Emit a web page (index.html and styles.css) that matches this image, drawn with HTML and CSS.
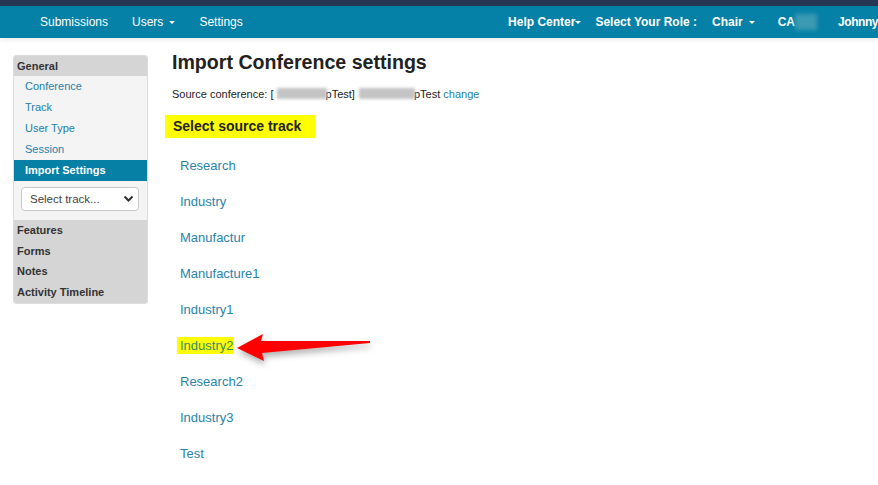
FILE: index.html
```html
<!DOCTYPE html>
<html>
<head>
<meta charset="utf-8">
<link rel="stylesheet" href="styles.css">
</head>
<body>
<div class="topband"></div>
<nav class="navbar">
  <div class="nav-left">
    <a class="nav-item">Submissions</a>
    <a class="nav-item">Users <span class="caret"></span></a>
    <a class="nav-item">Settings</a>
  </div>
  <div class="nav-right">
    <a class="nav-r help">Help Center<span class="caret tight"></span></a>
    <span class="nav-r role">Select Your Role :</span>
    <a class="nav-r chair">Chair <span class="caret"></span></a>
    <span class="nav-r ca">CA<span class="blur-nav"></span></span>
    <span class="nav-r user">Johnny</span>
  </div>
</nav>
<div class="page">
  <aside class="sidebar">
    <div class="sb-head">General</div>
    <ul class="sb-list">
      <li><a>Conference</a></li>
      <li><a>Track</a></li>
      <li><a>User Type</a></li>
      <li><a>Session</a></li>
      <li class="active"><a>Import Settings</a></li>
    </ul>
    <div class="sb-select-wrap">
      <div class="sb-select"><span>Select track...</span>
        <svg width="11" height="8" viewBox="0 0 11 8"><path d="M1.5 1.5 L5.5 5.5 L9.5 1.5" fill="none" stroke="#333" stroke-width="2"/></svg>
      </div>
    </div>
    <div class="sb-groups">
      <div class="sb-group">Features</div>
      <div class="sb-group">Forms</div>
      <div class="sb-group">Notes</div>
      <div class="sb-group">Activity Timeline</div>
    </div>
  </aside>
  <main class="main">
    <h1 class="title">Import Conference settings</h1>
    <p class="source">Source conference: [<span class="blur b1"></span>pTest] <span class="blur b2"></span>pTest <a class="link">change</a></p>
    <div class="select-head">Select source track</div>
    <ul class="tracks">
      <li><a>Research</a></li>
      <li><a>Industry</a></li>
      <li><a>Manufactur</a></li>
      <li><a>Manufacture1</a></li>
      <li><a>Industry1</a></li>
      <li><a class="hl">Industry2</a></li>
      <li><a>Research2</a></li>
      <li><a>Industry3</a></li>
      <li><a>Test</a></li>
    </ul>
  </main>
</div>
<svg class="arrow" width="150" height="40" viewBox="0 0 150 40">
  <path d="M2 22 L28 8 L26 15 L135 15 L135 17 L27 27 L29 35 Z" fill="#ff0000"/>
</svg>
</body>
</html>
```
FILE: styles.css
```css
* { box-sizing: border-box; }
body {
  margin: 0;
  font-family: "Liberation Sans", Arial, sans-serif;
  background: #fff;
  color: #222;
}
a { text-decoration: none; cursor: pointer; }
.topband { height: 6px; background: #253752; }
.navbar {
  height: 32px;
  background: #0580a6;
  display: flex;
  justify-content: space-between;
  align-items: center;
  color: #fff;
  box-shadow: 0 2px 5px rgba(0,0,0,0.08);
  overflow: hidden;
}
.nav-left { display: flex; padding-left: 28px; }
.nav-item {
  color: #fff;
  font-size: 12px;
  padding: 0 12px;
  display: flex;
  align-items: center;
}
.caret {
  display: inline-block;
  width: 0; height: 0;
  border-left: 3.5px solid transparent;
  border-right: 3.5px solid transparent;
  border-top: 3.5px solid #fff;
  margin-left: 6px;
  vertical-align: middle;
}
.caret.tight { margin-left: 0; }
.nav-right { display: flex; align-items: center; white-space: nowrap; }
.nav-r {
  color: #fff;
  font-size: 12px;
  font-weight: bold;
  display: flex;
  align-items: center;
}
.help { margin-right: 14px; }
.role { margin-right: 15px; }
.chair { margin-right: 23px; }
.ca { margin-right: 21px; }
.blur-nav {
  display: inline-block;
  width: 22px; height: 16px;
  background: #3c9ab2;
  filter: blur(2px);
}
.user { margin-right: 0; letter-spacing: -0.45px; }

.page {
  display: flex;
  align-items: flex-start;
  padding: 17px 0 0 13px;
}
.sidebar {
  width: 135px;
  flex: none;
  border: 1px solid #dcdcdc;
  border-radius: 3px;
  background: #f4f4f4;
  overflow: hidden;
  font-size: 11px;
}
.sb-head {
  background: #d5d5d5;
  font-weight: bold;
  color: #333;
  height: 20px;
  line-height: 20px;
  padding-left: 3px;
}
.sb-list { list-style: none; margin: 0; padding: 0; }
.sb-list li {
  height: 21px;
  line-height: 21px;
  padding-left: 11px;
}
.sb-list li a { color: #1b80aa; }
.sb-list li.active { background: #0780a6; }
.sb-list li.active a { color: #fff; font-weight: bold; }
.sb-select-wrap { padding: 6px 8px 9px 7px; }
.sb-select {
  height: 24px;
  background: #fff;
  border: 1px solid #c8c8c8;
  border-radius: 4px;
  display: flex;
  align-items: center;
  justify-content: space-between;
  padding: 0 4px 0 8px;
  color: #444;
  font-size: 11.5px;
}
.sb-groups { background: #d5d5d5; }
.sb-group {
  height: 20.7px;
  line-height: 20.7px;
  padding-left: 3px;
  font-weight: bold;
  color: #333;
}

.main { margin-left: 24px; flex: 1; }
.title {
  margin: 0;
  font-size: 19.6px;
  line-height: 14px;
  font-weight: bold;
  color: #222;
}
.source {
  margin: 18px 0 0 0;
  font-size: 11px;
  line-height: 14px;
  color: #222;
}
.blur {
  display: inline-block;
  height: 11px;
  background: #c4c4c4;
  filter: blur(1.5px);
  vertical-align: -1px;
}
.b1 { width: 50px; margin: 0 -1px 0 3px; }
.b2 { width: 56px; margin: 0 -1px 0 1px; }
.link { color: #1b80aa; }
.select-head {
  display: inline-block;
  margin: 14px 0 0 -7px;
  background: #ffff00;
  height: 23px;
  line-height: 23px;
  padding: 0 14px 0 8px;
  font-size: 14px;
  font-weight: bold;
  color: #222;
}
.tracks {
  list-style: none;
  margin: 10px 0 0 0;
  padding: 0 0 0 8px;
}
.tracks li {
  height: 36px;
  line-height: 36px;
  font-size: 13px;
}
.tracks li a { color: #2a83ab; }
.tracks li a.hl {
  background: #ffff00;
  color: #3a8a6a;
  padding: 1px 1px 1px 3px;
  margin-left: -3px;
}
.arrow {
  position: absolute;
  left: 235px;
  top: 326px;
  filter: drop-shadow(1px 4px 3px rgba(0,0,0,0.3));
}
```
